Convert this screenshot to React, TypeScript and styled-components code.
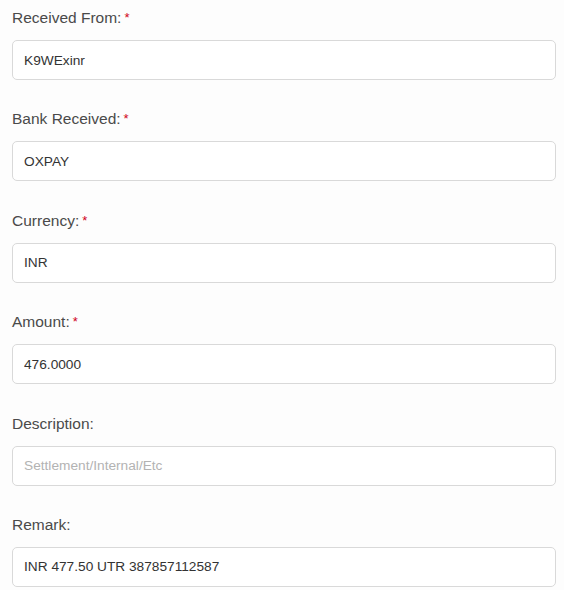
import React from "react";
import styled, { createGlobalStyle } from "styled-components";

const Global = createGlobalStyle`
  html, body { margin: 0; padding: 0; background: #fdfdfd; }
  body { font-family: "Liberation Sans", Arial, Helvetica, sans-serif; }
`;

const Form = styled.form`
  display: flex;
  flex-direction: column;
  gap: 28.4px;
  padding: 7px 8px 0 12px;
  width: 564px;
  box-sizing: border-box;
`;

const Group = styled.div`
  display: flex;
  flex-direction: column;
`;

const Label = styled.label`
  display: block;
  height: 22px;
  font-size: 15.5px;
  line-height: 22px;
  color: #4a4a4a;
  margin-bottom: 11px;
`;

const Req = styled.span`
  color: #d0021b;
  font-size: 13px;
  line-height: 0;
  margin-left: 3px;
  position: relative;
  top: -1px;
`;

const Input = styled.input`
  box-sizing: border-box;
  height: 40px;
  width: 100%;
  border: 1px solid #d9d9d9;
  border-radius: 5px;
  background: #ffffff;
  padding: 0 11px;
  font-family: "Liberation Sans", Arial, Helvetica, sans-serif;
  font-size: 13.7px;
  color: #333333;
  outline: none;
  &::placeholder { color: #b3b3b3; }
`;

const fields = [
  { label: "Received From:", value: "K9WExinr", required: true },
  { label: "Bank Received:", value: "OXPAY", required: true },
  { label: "Currency:", value: "INR", required: true },
  { label: "Amount:", value: "476.0000", required: true },
  { label: "Description:", value: "", placeholder: "Settlement/Internal/Etc", required: false },
  { label: "Remark:", value: "INR 477.50 UTR 387857112587", required: false },
];

export default function App() {
  return (
    <>
      <Global />
      <Form>
        {fields.map((f) => (
          <Group key={f.label}>
            <Label>
              {f.label}
              {f.required && <Req>*</Req>}
            </Label>
            <Input defaultValue={f.value} placeholder={f.placeholder} readOnly />
          </Group>
        ))}
      </Form>
    </>
  );
}
